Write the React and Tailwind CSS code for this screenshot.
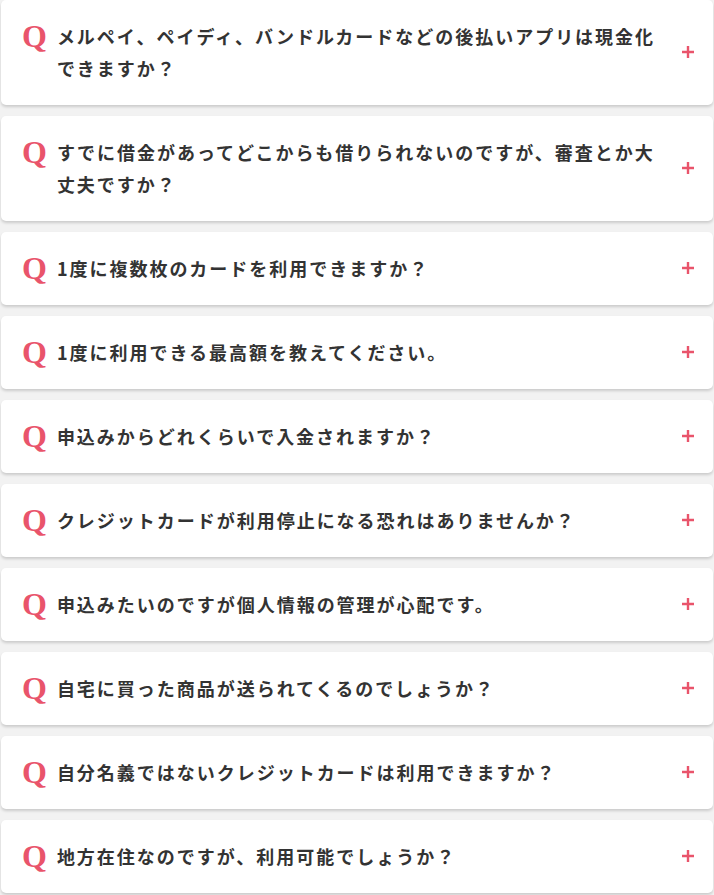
import React from "react";

const faqs = [
  "メルペイ、ペイディ、バンドルカードなどの後払いアプリは現金化できますか？",
  "すでに借金があってどこからも借りられないのですが、審査とか大丈夫ですか？",
  "1度に複数枚のカードを利用できますか？",
  "1度に利用できる最高額を教えてください。",
  "申込みからどれくらいで入金されますか？",
  "クレジットカードが利用停止になる恐れはありませんか？",
  "申込みたいのですが個人情報の管理が心配です。",
  "自宅に買った商品が送られてくるのでしょうか？",
  "自分名義ではないクレジットカードは利用できますか？",
  "地方在住なのですが、利用可能でしょうか？",
];

const FaqItem = ({ question }) => {
  return (
    <div className="flex items-center rounded-[5px] bg-white pt-5 pb-[21px] pl-[21px] pr-[19px] shadow-[0_2px_3px_rgba(0,0,0,0.16)]">
      <div className="flex flex-1 items-start">
        <span className="mr-[10px] font-['Liberation_Serif',serif] text-[32px] font-bold leading-[32px] text-[#e9546b]">
          Q
        </span>
        <p className="max-w-[604px] font-['Noto_Sans_CJK_JP',sans-serif] text-[18px] font-bold leading-[32px] tracking-[0.11em] text-[#333]">
          {question}
        </p>
      </div>
      {/* plus icon */}
      <svg width="12" height="12" viewBox="0 0 12 12" className="ml-3 shrink-0">
        <path d="M6 0v12M0 6h12" stroke="#e9546b" strokeWidth="2.4" />
      </svg>
    </div>
  );
};

const App = () => {
  return (
    <section className="min-h-screen bg-[#f2f2f2] px-[1px] pb-4">
      <div className="flex flex-col gap-[11px]">
        {faqs.map((q, i) => (
          <FaqItem key={i} question={q} />
        ))}
      </div>
    </section>
  );
};

export default App;
